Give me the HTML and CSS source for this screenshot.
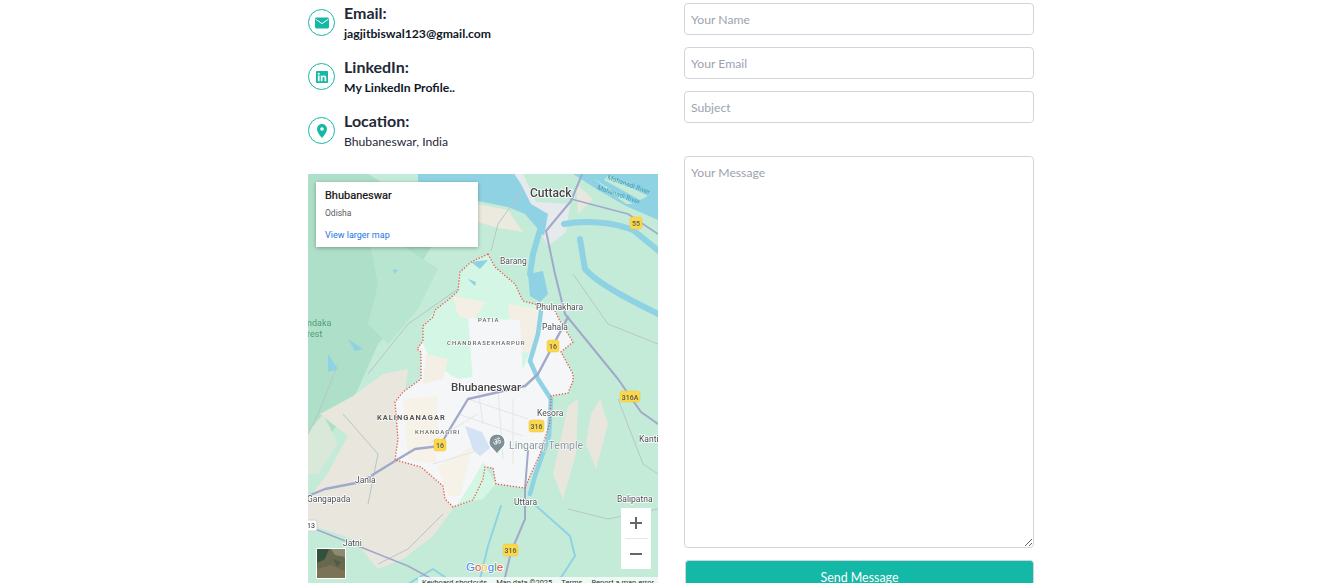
FILE: index.html
```html
<!DOCTYPE html>
<html lang="en">
<head>
<meta charset="utf-8">
<title>Contact</title>
<link rel="stylesheet" href="styles.css">
</head>
<body>
<section class="contact">
  <div class="info">
    <div class="rows">
      <div class="row">
        <span class="badge"><svg viewBox="0 0 14 12" width="14" height="12"><rect x="0" y="0.5" width="14" height="11" rx="1.4" fill="#14b8a6"/><path d="M0.6 2.2 7 6.6l6.4-4.4" fill="none" stroke="#fff" stroke-width="1"/></svg></span>
        <div class="row-text"><h4>Email:</h4><p class="strong">jagjitbiswal123@gmail.com</p></div>
      </div>
      <div class="row">
        <span class="badge"><svg viewBox="0 0 448 512" width="12" height="14"><path fill="#14b8a6" d="M416 32H31.900C14.300 32 0 46.500 0 64.300v383.400C0 465.500 14.300 480 31.900 480H416c17.600 0 32-14.500 32-32.300V64.300c0-17.800-14.400-32.300-32-32.300zM135.400 416H69V202.200h66.500V416zm-33.200-243c-21.300 0-38.500-17.300-38.500-38.500S80.900 96 102.200 96c21.200 0 38.500 17.300 38.500 38.500 0 21.300-17.200 38.500-38.500 38.500zm282.100 243h-66.400V312c0-24.800-.5-56.700-34.500-56.700-34.600 0-39.900 27-39.900 54.900V416h-66.400V202.200h63.700v29.200h.9c8.900-16.800 30.600-34.500 62.900-34.500 67.200 0 79.700 44.300 79.700 101.900V416z"/></svg></span>
        <div class="row-text"><h4>LinkedIn:</h4><p class="strong">My LinkedIn Profile..</p></div>
      </div>
      <div class="row">
        <span class="badge"><svg viewBox="0 0 10 14" width="10" height="14"><path fill="#14b8a6" fill-rule="evenodd" d="M5 0a5 5 0 0 1 5 5c0 3.200-3.400 7.200-5 9-1.600-1.800-5-5.800-5-9a5 5 0 0 1 5-5zm0 3.200a1.800 1.800 0 1 0 0 3.600 1.800 1.800 0 0 0 0-3.600z"/></svg></span>
        <div class="row-text"><h4>Location:</h4><p>Bhubaneswar, India</p></div>
      </div>
    </div>

    <div class="map">
      <svg class="map-art" viewBox="0 0 350 415" width="350" height="415">
        <rect width="350" height="415" fill="#c4ebd8"/>
        <path d="M0 0H60L110 30 125 70 100 110 95 140 70 170 50 215 30 250 0 290Z" fill="#aedfc8"/>
        <path d="M60 60 100 75 130 95 110 135 80 170 60 150 70 110Z" fill="#b8e5cf"/>
        <path d="M0 325 18 302 40 262 12 240 45 222 75 200 100 195 90 270 130 300 145 335 125 362 95 385 70 395 45 365 0 350Z" fill="#e9e7dd"/>
        <path d="M0 258 15 240 30 270 10 300 0 300Z" fill="#d9e8d9"/>
        <path d="M245 300 260 232 270 225 268 280 255 325Z M283 240 292 225 300 250 288 295 278 270Z M268 10 285 25 270 40Z" fill="#e9e7dd"/>
        <path d="M170 30 200 36 215 58 190 54 170 48Z" fill="#ece9df"/>
        <path d="M165 0H215L228 28 262 30 258 58 240 72 232 58 222 32 205 5Z" fill="#e7eaed"/>
        <path d="M110 -2H205L213 10 223 30 240 40 236 62 217 40 200 33 170 27 110 8Z" fill="#8ed2e4"/>
        <path d="M262 -2H350V46L318 32 290 16Z" fill="#8ed2e4"/>
        <path d="M300 2 340 22 332 26 296 6Z M285 4 325 30 318 30Z" fill="#c4ebd8"/>
        <path d="M180 80 163 88 152 98 150 117 140 126 127 136 125 143 115 152 115 167 109 175 113 178 113 205 95 218 87 228 90 265 87 286 113 293 135 312 137 325 145 333 165 326 175 305 177 293 185 294 188 310 217 314 222 302 232 280 242 248 243 222 260 219 265 207 265 200 253 178 265 168 252 147 247 137 227 130 215 127 207 110 187 93Z" fill="#f5f6f7"/>
        <path d="M180 80 163 88 152 98 150 117 127 136 115 152 115 170 125 190 150 205 215 195 233 150 227 130 215 127 207 110 187 93Z" fill="#d4f6e4"/>
        <path d="M145 122 178 128 165 146 150 142Z M200 130 232 135 228 180 205 176Z M118 180 140 185 135 205 115 210Z" fill="#f3efe4"/>
        <path d="M160 144 212 146 215 205 165 208Z" fill="#f5f6f7"/>
        <path d="M95 225 130 222 128 290 100 285Z M130 292 165 272 152 322 140 322Z" fill="#f6f2e7"/>
        <path d="M165 306 175 288 188 310 175 325 150 330Z" fill="#d4f6e4"/>
        <g fill="none" stroke="#8ed2e4" stroke-linecap="round" stroke-linejoin="round">
          <path d="M256 50C275 46 305 48 325 56L352 78" stroke-width="6"/>
          <path d="M272 65 277 95C290 110 320 125 360 145" stroke-width="6"/>
          <path d="M232 56 225 80 222 100" stroke-width="6"/>
          <path d="M233 137 230 160 222 187 230 205 243 225 241 262 227 302 222 320" stroke-width="4.500"/>
          <path d="M226 330 262 362 267 382 252 405" stroke-width="2"/>
          <path d="M193 332 180 372 172 405" stroke-width="2"/>
          <path d="M100 410 125 395 150 412" stroke-width="2"/>
        </g>
        <path d="M220 100 235 97 240 120 232 128 222 122Z" fill="#8ed2e4"/>
        <path d="M157 252 174 258 182 274 172 282 165 276Z" fill="#d3e2f4"/>
        <path d="M163 88 180 86 172 95Z M160 105 168 108 167 112Z M85 95 90 96 86 100Z M40 165 55 175 47 177Z M20 180 30 195 20 198Z" fill="#8ed2e4"/>
        <g fill="none" stroke="#b8c6c8" stroke-width="1">
          <path d="M183 77 190 50 215 15"/>
          <path d="M60 200 100 150 150 115"/>
          <path d="M265 100 300 150 350 170"/>
          <path d="M135 340 100 375 70 390"/>
          <path d="M260 335 300 345 350 335"/>
          <path d="M310 225 335 290 350 300"/>
          <path d="M30 190 10 240 0 260"/>
          <path d="M35 240 70 280 60 330"/>
        </g>
        <g fill="none" stroke="#e3e6e9" stroke-width="1">
          <path d="M160 225 220 245M150 240 215 262M170 215 175 250M190 215 195 285M205 225 205 290M120 270 170 240M125 290 175 275"/>
        </g>
        <g fill="none" stroke="#a1a9ca" stroke-linecap="round" stroke-linejoin="round">
          <path d="M275 -2 263 27 238 57 247 100 257 140 310 205 333 238 350 250" stroke-width="2"/>
          <path d="M263 25 320 40 350 60" stroke-width="1.600"/>
          <path d="M260 143 230 200 217 212 160 225 140 258 132 272 107 275 87 287 53 308 17 315 0 322" stroke-width="2.400"/>
          <path d="M220 277 217 315 217 345 203 378 195 412" stroke-width="2"/>
          <path d="M7 355 50 372 100 392 133 410" stroke-width="1.600"/>
        </g>
        <path d="M180 80 163 88 152 98 150 117 140 126 127 136 125 143 115 152 115 167 109 175 113 178 113 205 95 218 87 228 90 265 87 286 113 293 135 312 137 325 145 333 165 326 175 305 177 293 185 294 188 310 217 314 222 302 232 280 242 248 243 222 260 219 265 207 265 200 253 178 265 168 252 147 247 137 227 130 215 127 207 110 187 93Z" fill="none" stroke="#e8574b" stroke-width="1.300" stroke-dasharray="1.300 1.700"/>
        <g class="shields">
          <rect x="322" y="43" width="12" height="12" rx="2.500"/>
          <rect x="239" y="166" width="12" height="12" rx="2.500"/>
          <rect x="126" y="265" width="12" height="12" rx="2.500"/>
          <rect x="221" y="246" width="15" height="12" rx="2.500"/>
          <rect x="312" y="217" width="20" height="11" rx="2.500"/>
          <rect x="195" y="370" width="15" height="12" rx="2.500"/>
        </g>
        <rect x="-4" y="346" width="13" height="11" rx="2" fill="#fff" stroke="#cfd4d4"/>
        <g class="shield-text">
          <text x="328" y="52">55</text><text x="245" y="175">16</text><text x="132" y="274">16</text>
          <text x="228.500" y="255">316</text><text x="322" y="225.500">316A</text><text x="202.500" y="379">316</text><text x="3" y="354">13</text>
        </g>
        <g class="place">
          <text x="192" y="90">Barang</text><text x="228" y="136">Phulnakhara</text><text x="234" y="156">Pahala</text>
          <text x="229" y="242">Kesora</text><text x="47" y="309">Janla</text><text x="-1" y="328">Gangapada</text>
          <text x="206" y="331">Uttara</text><text x="35" y="372">Jatni</text><text x="309" y="328">Balipatna</text><text x="331" y="268">Kanti</text>
        </g>
        <text class="city big" x="222" y="23">Cuttack</text>
        <text class="city" x="143" y="217">Bhubaneswar</text>
        <g class="hood">
          <text x="170" y="148">PATIA</text><text x="139" y="171">CHANDRASEKHARPUR</text><text x="107" y="260">KHANDAGIRI</text>
        </g>
        <text class="hood-big" x="69" y="246">KALINGANAGAR</text>
        <g class="forest"><text x="-1" y="152">ndaka</text><text x="-1" y="163">rest</text></g>
        <g class="water">
          <text transform="translate(299 5) rotate(20)">Mahanadi River</text>
          <text transform="translate(289 15) rotate(20)">Mahanadi River</text>
        </g>
        <path d="M181 268a8 8 0 0 1 16 0c0 5-5 7-8 12-3-5-8-7-8-12z" fill="#7f9098" stroke="#fff"/>
        <text class="om" x="189" y="271">ॐ</text>
        <text class="poi" x="201" y="275">Lingaraj Temple</text>
      </svg>

      <div class="place-card">
        <div class="place-name">Bhubaneswar</div>
        <div class="place-region">Odisha</div>
        <div class="place-link">View larger map</div>
      </div>

      <div class="zoom-box">
        <span class="zoom-btn"><svg viewBox="0 0 14 14" width="14" height="14"><path d="M7 1v12M1 7h12" stroke="#666" stroke-width="2"/></svg></span>
        <span class="zoom-sep"></span>
        <span class="zoom-btn"><svg viewBox="0 0 14 14" width="14" height="14"><path d="M1 7h12" stroke="#666" stroke-width="2"/></svg></span>
      </div>

      <div class="thumb"><svg viewBox="0 0 28 29" width="28" height="29"><rect width="28" height="29" fill="#67694f"/><path d="M0 0H12L8 10 0 14Z" fill="#33503d"/><path d="M14 0H28V8L18 6Z" fill="#8b8a73"/><path d="M0 20 14 16 28 22V29H0Z" fill="#7a7358"/><path d="M16 10 24 13 20 18Z" fill="#4f5d48"/></svg></div>

      <div class="google"><span class="g-b">G</span><span class="g-r">o</span><span class="g-y">o</span><span class="g-b">g</span><span class="g-g">l</span><span class="g-r">e</span></div>

      <div class="attribution"><span>Keyboard shortcuts</span><span>Map data ©2025</span><span>Terms</span><span>Report a map error</span></div>
    </div>
  </div>

  <form class="form">
    <input class="field" type="text" placeholder="Your Name">
    <input class="field" type="email" placeholder="Your Email">
    <input class="field field-last" type="text" placeholder="Subject">
    <textarea class="field message" placeholder="Your Message"></textarea>
    <button class="send" type="button">Send Message</button>
  </form>
</section>
</body>
</html>
```

FILE: styles.css
```css
html, body {
  margin: 0;
  height: 583px;
  overflow: hidden;
  background: #fff;
}
body {
  font-family: "Lato", "Noto Sans", sans-serif;
  color: #1f2937;
}
.contact {
  display: grid;
  grid-template-columns: 350px 350px;
  column-gap: 26px;
  justify-content: center;
  padding: 3px 1px 0 0;
}
.rows {
  display: flex;
  flex-direction: column;
  gap: 10px;
}
.row {
  display: flex;
  gap: 9px;
  height: 44px;
  align-items: flex-start;
}
.badge {
  box-sizing: border-box;
  flex: none;
  width: 27px;
  height: 27px;
  margin-top: 6px;
  border: 1px solid #14b8a6;
  border-radius: 50%;
  display: flex;
  align-items: center;
  justify-content: center;
}
.row-text h4 {
  margin: 0;
  font-size: 16px;
  line-height: 20px;
  font-weight: 700;
  color: #1f2937;
}
.row-text p {
  margin: 1px 0 0;
  font-size: 12.200px;
  line-height: 20px;
}
.row-text p.strong {
  font-weight: 700;
  color: #111827;
}
.map {
  position: relative;
  width: 350px;
  height: 415px;
  margin-top: 19px;
  overflow: hidden;
}
.map-art {
  display: block;
  font-family: "Roboto", sans-serif;
  filter: blur(0.3px);
}
.shields rect { fill: #fbd84b; stroke: #eec437; stroke-width: 0.500; }
.shield-text text { font-size: 7px; text-anchor: middle; fill: #555; font-weight: 500; }
.place text { font-size: 8.500px; fill: #4a4f52; stroke: #fff; stroke-width: 1.500px; paint-order: stroke; }
.city { font-size: 11.500px; font-weight: 500; fill: #444; stroke: #fff; stroke-width: 1.500px; paint-order: stroke; }
.city.big { font-size: 12px; }
.hood text { font-size: 6px; letter-spacing: 1px; font-weight: 500; fill: #666; stroke: #fff; stroke-width: 1px; paint-order: stroke; }
.hood-big { font-size: 7.500px; letter-spacing: 1px; font-weight: 700; fill: #555; stroke: #fff; stroke-width: 1px; paint-order: stroke; }
.forest text { font-size: 9px; fill: #4d9c78; }
.water text { font-size: 6.500px; fill: #3f9bb5; }
.om { font-size: 9px; text-anchor: middle; fill: #fff; font-family: "DejaVu Sans", sans-serif; }
.poi { font-size: 10.500px; fill: #8a979e; stroke: #fff; stroke-width: 1px; paint-order: stroke; }
.place-card {
  position: absolute;
  left: 8px;
  top: 8px;
  box-sizing: border-box;
  width: 162px;
  height: 65px;
  padding: 7px 9px;
  background: #fff;
  box-shadow: 0 1px 4px rgba(0, 0, 0, 0.3);
  font-family: "Roboto", sans-serif;
}
.place-name { font-size: 11px; line-height: 13px; font-weight: 400; color: #111; -webkit-text-stroke: 0.200px #111; }
.place-region { font-size: 8.500px; line-height: 12px; margin-top: 5px; color: #5b5b5b; }
.place-link { font-size: 9px; line-height: 12px; margin-top: 10px; color: #1a73e8; }
.zoom-box {
  position: absolute;
  left: 313px;
  top: 334px;
  width: 30px;
  height: 61px;
  background: #fff;
  display: flex;
  flex-direction: column;
  align-items: center;
}
.zoom-btn { height: 30px; flex: none; display: flex; align-items: center; justify-content: center; }
.zoom-sep { width: 23px; height: 1px; background: #e6e6e6; flex: none; }
.thumb {
  position: absolute;
  left: 8px;
  top: 374px;
  width: 28px;
  height: 29px;
  border: 1px solid #fff;
  line-height: 0;
}
.google {
  position: absolute;
  left: 158px;
  top: 385px;
  font-family: "Liberation Sans", sans-serif;
  font-size: 11.500px;
  line-height: 16px;
  -webkit-text-stroke: 1.500px #fff;
  paint-order: stroke fill;
}
.g-b { color: #4285f4; }
.g-r { color: #ea4335; }
.g-y { color: #fbbc05; }
.g-g { color: #34a853; }
.attribution {
  position: absolute;
  right: 0;
  bottom: 0;
  box-sizing: border-box;
  width: 240px;
  height: 12px;
  display: flex;
  justify-content: flex-end;
  gap: 9px;
  padding: 0 4px;
  background: rgba(255, 255, 255, 0.75);
  font-family: "Roboto", sans-serif;
  font-size: 7.500px;
  line-height: 11px;
  color: #333;
  white-space: nowrap;
}
.form {
  display: flex;
  flex-direction: column;
}
.field {
  box-sizing: border-box;
  display: block;
  width: 350px;
  height: 32px;
  margin: 0 0 12px;
  padding: 0 6px;
  border: 1px solid #d1d5db;
  border-radius: 4px;
  outline: none;
  background: #fff;
  font-family: "Lato", "Noto Sans", sans-serif;
  font-size: 12.200px;
  color: #1f2937;
}
.field::placeholder { color: #9ca3af; opacity: 1; }
.field-last { margin-bottom: 33px; }
.message {
  height: 392px;
  padding: 7px 6px;
  line-height: 17px;
  resize: vertical;
}
.send {
  box-sizing: border-box;
  width: 349px;
  height: 34px;
  margin-left: 1px;
  padding: 0;
  border: 1px solid #d1d5db;
  border-bottom: 0;
  border-radius: 4px;
  background: #14b8a6;
  color: #fff;
  font-family: "Lato", "Noto Sans", sans-serif;
  font-size: 12.400px;
  line-height: 32px;
}
```
